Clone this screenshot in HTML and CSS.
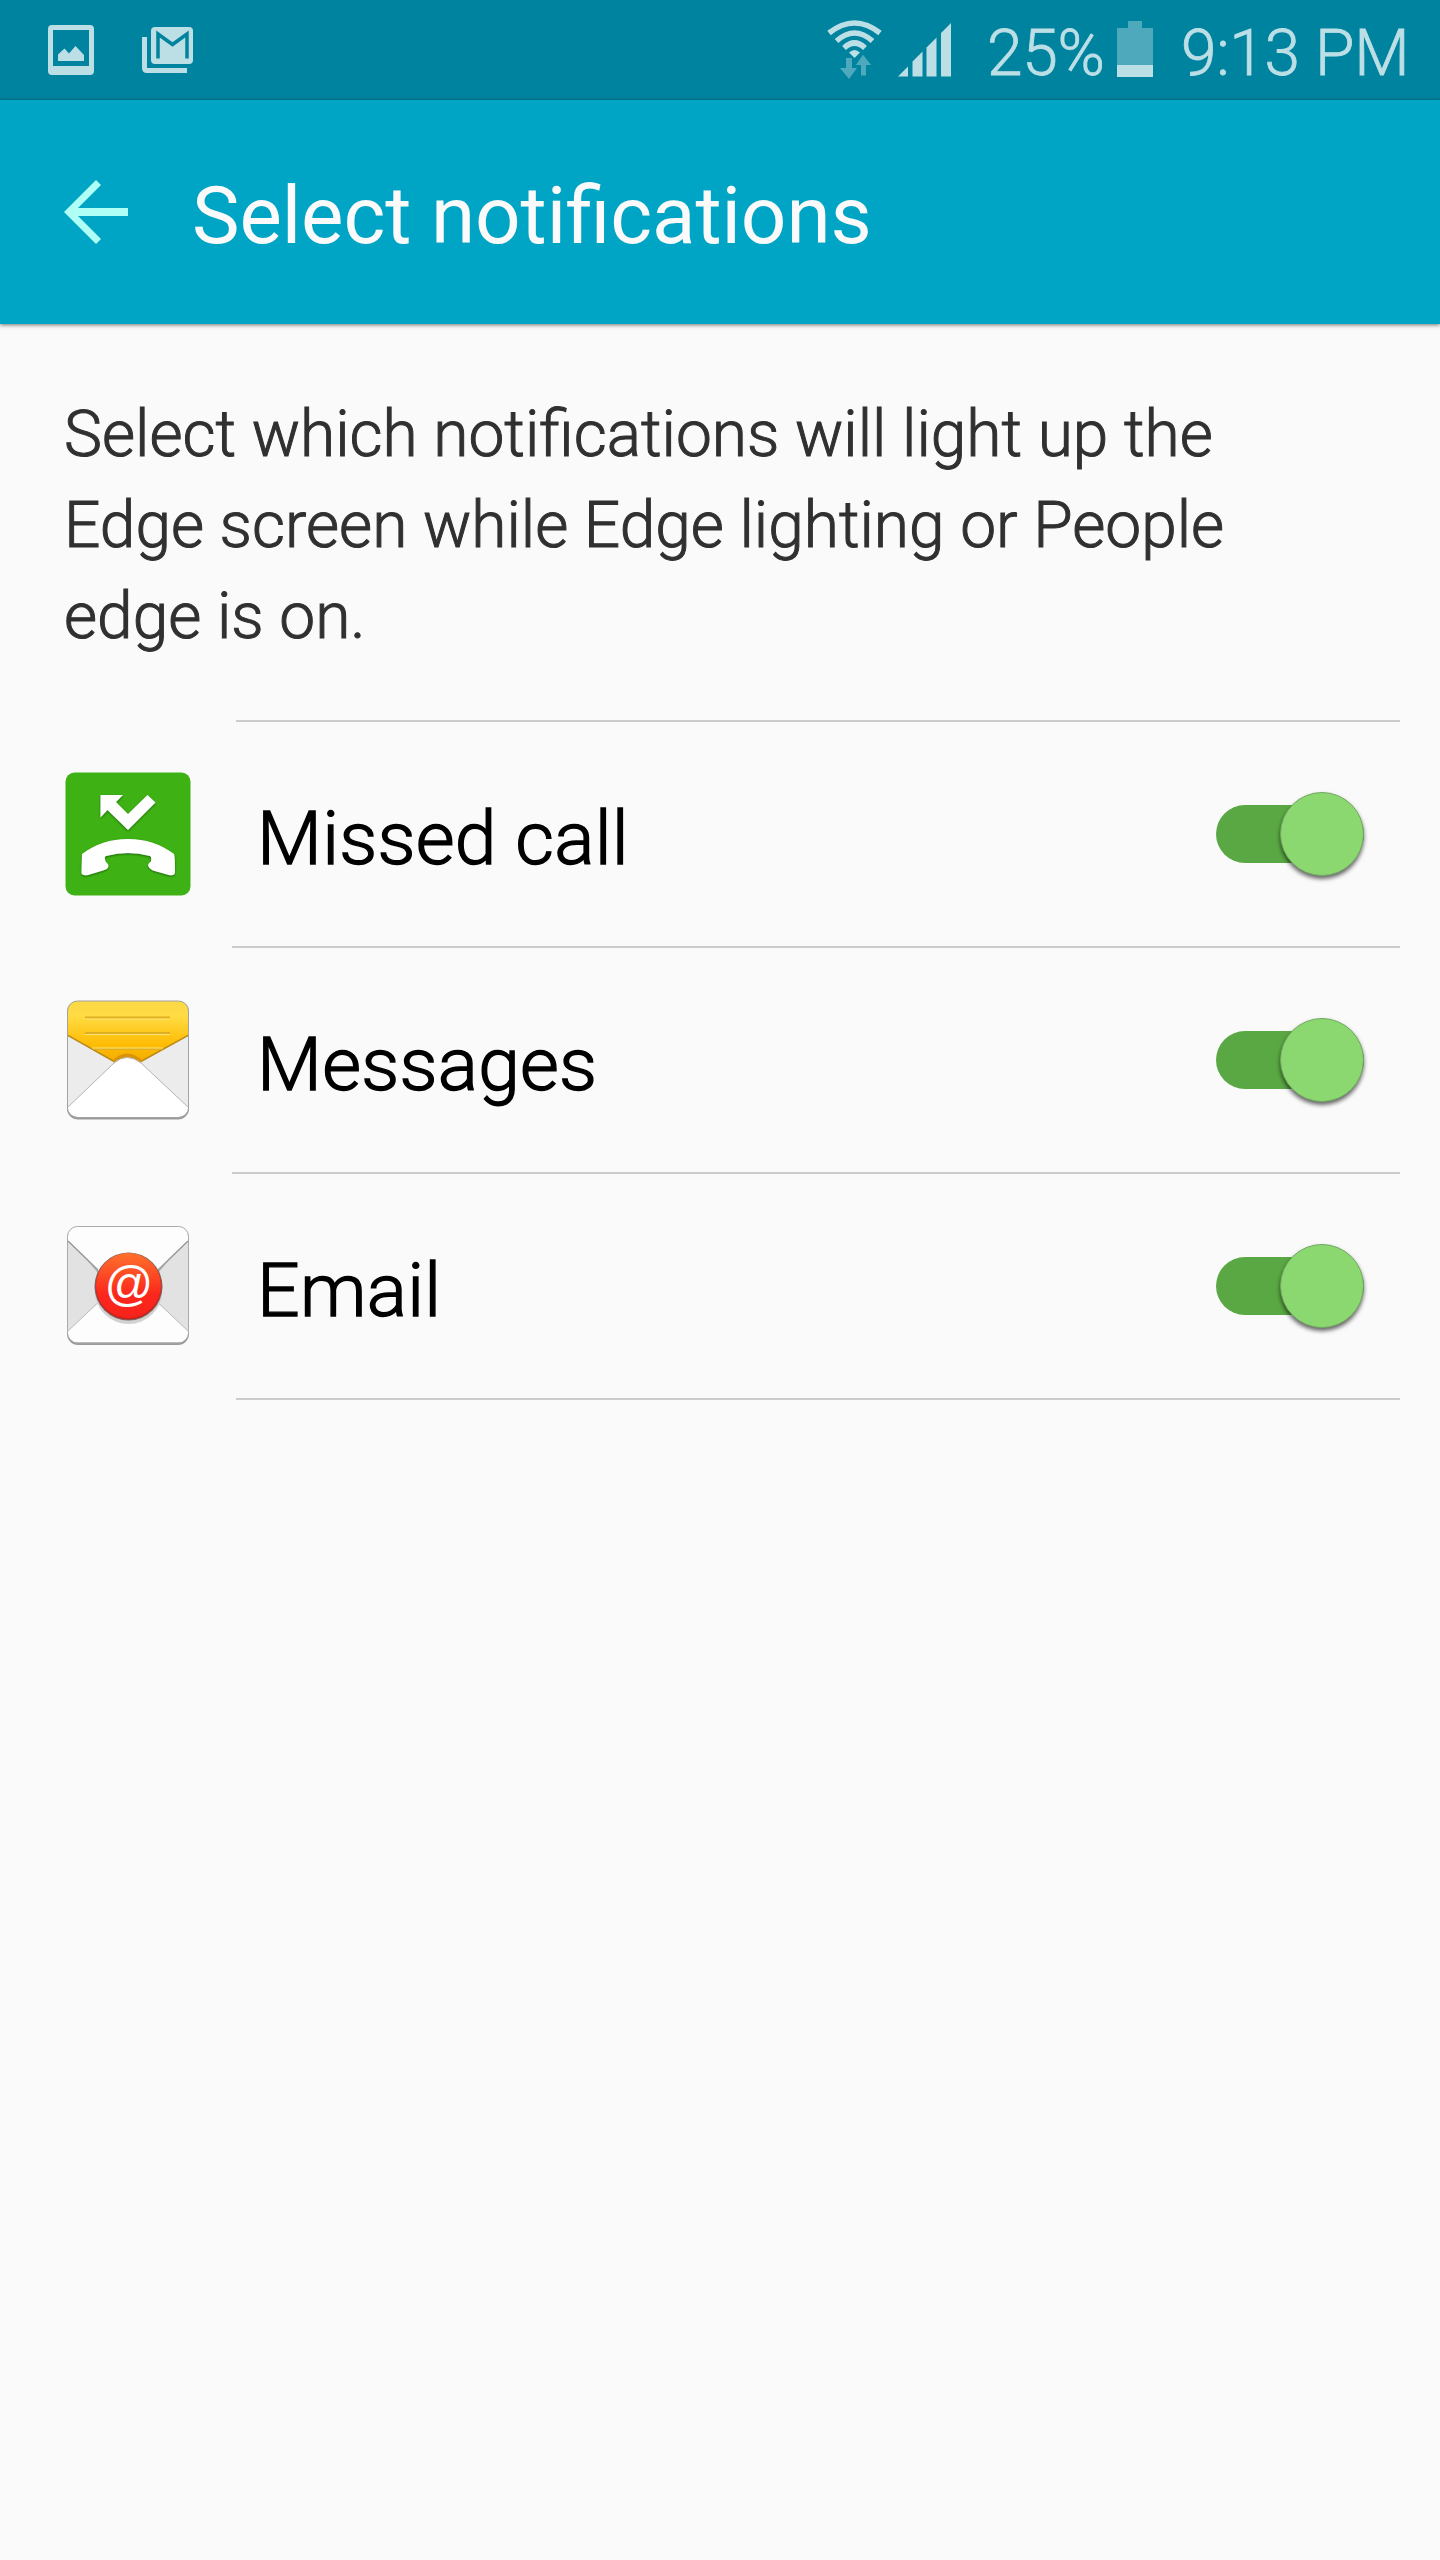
FILE: index.html
```html
<!DOCTYPE html>
<html lang="en">
<head>
<meta charset="utf-8">
<title>Select notifications</title>
<link rel="stylesheet" href="styles.css">
</head>
<body>
<div class="status-bar">
  <div class="status-left">
    <svg width="46" height="50" viewBox="0 0 46 50"><path fill="#bcdfe6" fill-rule="evenodd" d="M4 0H42Q46 0 46 4V46Q46 50 42 50H4Q0 50 0 46V4Q0 0 4 0ZM5 5V41H41V5Z"/><path fill="#bcdfe6" d="M10 36V29.500L16.500 23.500L21 28.500L27.500 21L36 30V36Z"/></svg>
    <svg class="mail-status" width="51" height="46" viewBox="0 0 51 46"><path fill="#bcdfe6" d="M0 10H5V41H45V46H5Q0 46 0 41Z"/><rect x="9" width="42" height="37" rx="4" fill="#bcdfe6"/><path d="M16 31.500V7L30.500 17.500L45 7V31.500" fill="none" stroke="#00839f" stroke-width="3.500"/></svg>
  </div>
  <div class="status-right">
    <svg class="wifi" width="56" height="60" viewBox="0 0 56 60"><g fill="none" stroke="#bcdfe6" stroke-width="5.500"><path d="M2 13Q27.500-7 53 13"/><path d="M9.500 21Q27.500 5 45.500 21"/><path d="M17 28Q27.500 18 38 28"/></g><path fill="#bcdfe6" d="M22 32.500Q27.500 27.500 33 32.500L27.500 38Z"/><path fill="#4ea9bd" d="M19 38H25V48H30L22 59L13 48H19Z"/><path fill="#4ea9bd" stroke="#00839f" stroke-width="1" d="M36 34L45 45.500H39.500V56H33.500V45.500H28Z"/></svg>
    <svg class="signal" width="53" height="54" viewBox="0 0 53 54"><path fill="#bcdfe6" d="M0 53.500L10 43.500V53.500ZM14.500 38.500L24.500 28.500V53.500H14.500ZM28.500 24.500L38.500 14.500V53.500H28.500ZM43 10L53 0V53.500H43Z"/></svg>
    <span class="percent">25%</span>
    <svg class="battery" width="36" height="56" viewBox="0 0 36 56"><path fill="#4ea9bd" d="M11 0H25V7H36V44H0V7H11Z"/><path fill="#bcdfe6" d="M0 44H36V56H0Z"/></svg>
    <span class="clock">9:13 PM</span>
  </div>
</div>
<header class="app-bar">
  <svg width="64" height="64" viewBox="0 0 64 64"><path fill="#b0fff6" d="M32 0L37 5L14 28H64V36H14L37 59L32 64L0 32Z"/></svg>
  <h1 class="title">Select notifications</h1>
</header>
<main>
  <p class="description">Select which notifications will light up the Edge screen while Edge lighting or People edge is on.</p>
  <ul class="list">
    <li class="row">
      <svg class="icon" width="128" height="128" viewBox="0 0 128 128">
        <defs><filter id="soft" x="-10%" y="-10%" width="120%" height="130%"><feDropShadow dx="0" dy="1" stdDeviation=".8" flood-color="#164d00" flood-opacity=".75"/></filter></defs>
        <rect x="1.500" y="2.500" width="125" height="123" rx="9" fill="#3eb214"/>
        <g fill="#fff" filter="url(#soft)"><path d="M36.500 25H59L52 32L64 44L83.500 25L91.500 32.500L64 60L43.500 40L36.500 47.500Z"/><path d="M18 84Q38 69 64 69Q90 69 110 84Q111 86 111 102Q111 106 105 105L89 100.500C83 97 83 94 86.500 92C88 90 87 86 86 86Q75 83 64 83Q53 83 42 86C40 87 41 90 42 92C46 95 45 99 39 100.500L24 105Q17 106 17.500 102Z"/></g>
      </svg>
      <div class="content"><span class="label">Missed call</span><span class="switch"><span class="thumb"></span></span></div>
    </li>
    <li class="row">
      <svg class="icon envelope" width="128" height="128" viewBox="0 0 128 128">
        <defs><linearGradient id="gold" x2="0" y2="1"><stop stop-color="#fbd945"/><stop offset=".25" stop-color="#ffdc44"/><stop offset=".7" stop-color="#ffbd06"/><stop offset="1" stop-color="#f3ac00"/></linearGradient><clipPath id="env"><rect x="3.500" y="4" width="121" height="116" rx="10"/></clipPath></defs>
        <rect x="3" y="4" width="122" height="118.500" rx="11" fill="#9b9b9b"/>
        <rect x="3.500" y="4" width="121" height="116" rx="10" fill="#ececec"/>
        <g clip-path="url(#env)"><path fill="url(#gold)" d="M3 3H125V38L76 65H51L3 38Z"/><path d="M3 38L51 65M125 38L76 65" stroke="#b98a17" stroke-width="1.500"/>
        <path d="M21 20.500H106M21 36H106M29 52H98" stroke="#deae20" stroke-width="1.800"/><path d="M21 22H106M21 37.500H106M28 51H99" stroke="#ffe477"/>
        <path d="M50 65Q63 52 77 65" fill="none" stroke="#d8930b" stroke-width="4"/><path fill="#fff" stroke="#b4b4b4" d="M3 111L50 66Q63 55 77 66L125 111V122H3Z"/></g>
        <rect x="3.500" y="4" width="121" height="116.500" rx="10" fill="none" stroke="#a3a3a3"/>
      </svg>
      <div class="content"><span class="label">Messages</span><span class="switch"><span class="thumb"></span></span></div>
    </li>
    <li class="row">
      <svg class="icon envelope" width="128" height="128" viewBox="0 0 128 128">
        <defs><linearGradient id="red" x2="0" y2="1"><stop stop-color="#ff712d"/><stop offset=".65" stop-color="#fb261c"/><stop offset="1" stop-color="#f7221b"/></linearGradient></defs>
        <rect x="3" y="4" width="122" height="118" rx="11" fill="#9b9b9b"/><rect x="3.500" y="3.500" width="121" height="116" rx="10" fill="#fdfdfd"/>
        <path fill="#e2e2e2" d="M4 18L64 77L4 108ZM124 18L64 77L124 108Z"/>
        <path fill="#fdfdfd" d="M4 108L50 65H78L124 108Z"/>
        <path d="M4 18L34 47M124 18L94 47" stroke="#999" stroke-width="1.500"/><path d="M4 108L40 74M124 108L88 74" stroke="#bbb"/>
        <path d="M22 36L34 47V50ZM106 36L94 47V50Z" fill="#aaa"/>
        <rect x="3.500" y="3.500" width="121" height="116.500" rx="10" fill="none" stroke="#aaa"/>
        <circle cx="64.500" cy="67" r="34" fill="#d2d2d2"/><circle cx="64.500" cy="63.500" r="34" fill="#7d6662"/><circle cx="64.500" cy="63.500" r="33" fill="#ca2019"/><circle cx="64.500" cy="62.500" r="32.500" fill="url(#red)"/>
        <text class="at" x="64" y="76.500" text-anchor="middle">@</text>
      </svg>
      <div class="content"><span class="label">Email</span><span class="switch"><span class="thumb"></span></span></div>
    </li>
  </ul>
</main>
</body>
</html>
```
FILE: styles.css
```css
* { box-sizing: border-box; }
body { margin: 0; min-height: 2560px; background: #fafafa; font-family: Roboto, "Liberation Sans", sans-serif; color: #000; font-feature-settings: "liga" 1; }
svg { display: block; flex: none; overflow: visible; }
.status-bar { height: 100px; background: #00839f; color: #bcdfe6; display: flex; justify-content: space-between; padding: 0 32px 0 48px; font-size: 64px; font-weight: 300; line-height: 107px; -webkit-text-stroke: .8px currentColor; }
.status-left { display: flex; align-items: flex-start; padding-top: 25px; gap: 48px; }
.mail-status { margin-top: 2px; }
.status-right { display: flex; align-items: flex-start; white-space: nowrap; letter-spacing: -.3px; }
.wifi { margin: 20px 15px 0 0; }
.signal { margin: 23px 36px 0 0; }
.percent { width: 118px; }
.battery { margin: 21px 28px 0 12px; }
.clock { width: 227px; }
.app-bar { height: 224px; background: #00a5c6; display: flex; align-items: center; gap: 64px; padding: 0 64px; box-shadow: 0 1px 4px rgba(0,0,0,.55); }
.title { margin: 7px 0 0; color: #fafafa; font-size: 80px; font-weight: 400; line-height: 94px; letter-spacing: -.1px; white-space: nowrap; }
.description { margin: 0; padding: 65px 160px 63px 64px; height: 396px; color: #303030; font-size: 64px; font-weight: 300; line-height: 91px; -webkit-text-stroke: 1px currentColor; }
.list { list-style: none; margin: 0; padding: 0 40px 0 64px; }
.row { height: 226px; display: flex; }
.icon { margin: 50px 40px 0 0; }
.envelope { margin-top: 51px; }
.content { flex: 1; border-top: 2px solid #ccc; display: flex; align-items: center; justify-content: space-between; padding: 0 36px 0 24px; }
.row:first-child .content { margin-left: 4px; padding-left: 20px; }
.row:last-child { height: 228px; }
.row:last-child .content { background: linear-gradient(#ccc, #ccc) 4px 100% / 100% 2px no-repeat; padding-bottom: 2px; }
.label { font-size: 75px; line-height: 90px; padding: 7px 0 0 1px; font-weight: 300; letter-spacing: .25px; -webkit-text-stroke: 1.4px currentColor; }
.switch { width: 148px; height: 58px; display: flex; align-items: center; justify-content: flex-end; border-radius: 29px; background: #5aa843; }
.thumb { width: 84px; height: 84px; flex: none; border-radius: 50%; background: #8bd870; border: 1px solid #72a961; box-shadow: 0 3px 4px rgba(0,0,0,.6); }
.at { font: italic 400 48px "Liberation Sans", sans-serif; fill: #fff; }
```
